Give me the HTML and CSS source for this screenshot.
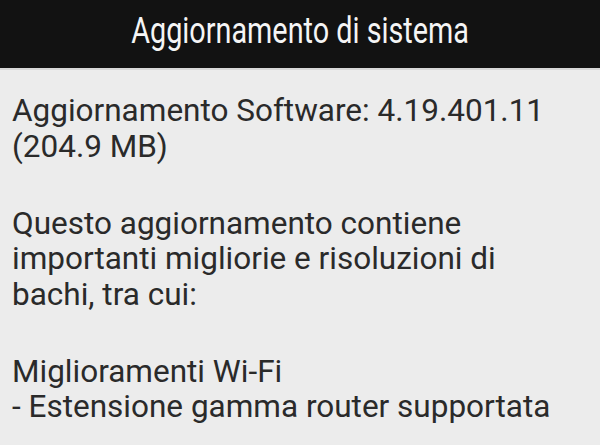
FILE: index.html
```html
<!DOCTYPE html>
<html lang="it">
<head>
    <meta charset="UTF-8">
    <meta name="viewport" content="width=device-width, initial-scale=1.0">
    <title>Aggiornamento di sistema</title>
    <link rel="stylesheet" href="styles.css">
</head>
<body>
    <div class="header">
        <span class="title">Aggiornamento di sistema</span>
    </div>

    <div class="content">
        <p>Aggiornamento Software: 4.19.401.11<br>(204.9 MB)</p>
        <p>Questo aggiornamento contiene<br>importanti migliorie e risoluzioni di<br>bachi, tra cui:</p>
        <p>Miglioramenti Wi-Fi<br>- Estensione gamma router supportata</p>
    </div>
</body>
</html>
```

FILE: styles.css
```css
body {
    margin: 0;
    background-color: #ececec;
    font-family: Roboto, "Liberation Sans", sans-serif;
    overflow: hidden;
}

.header {
    height: 70px;
    background-color: #121212;
    border-bottom: 2px solid #d8d8d8;
    text-align: center;
    box-sizing: border-box;
}

.title {
    display: inline-block;
    color: #f5f5f5;
    font-size: 36px;
    line-height: 62px;
    transform: scaleX(0.8);
    transform-origin: center;
    white-space: nowrap;
}

.content {
    padding: 23px 12px 0;
    color: #2a2a2a;
    font-size: 31.5px;
    line-height: 35.5px;
}

.content p {
    margin: 0 0 41.5px;
}
```
